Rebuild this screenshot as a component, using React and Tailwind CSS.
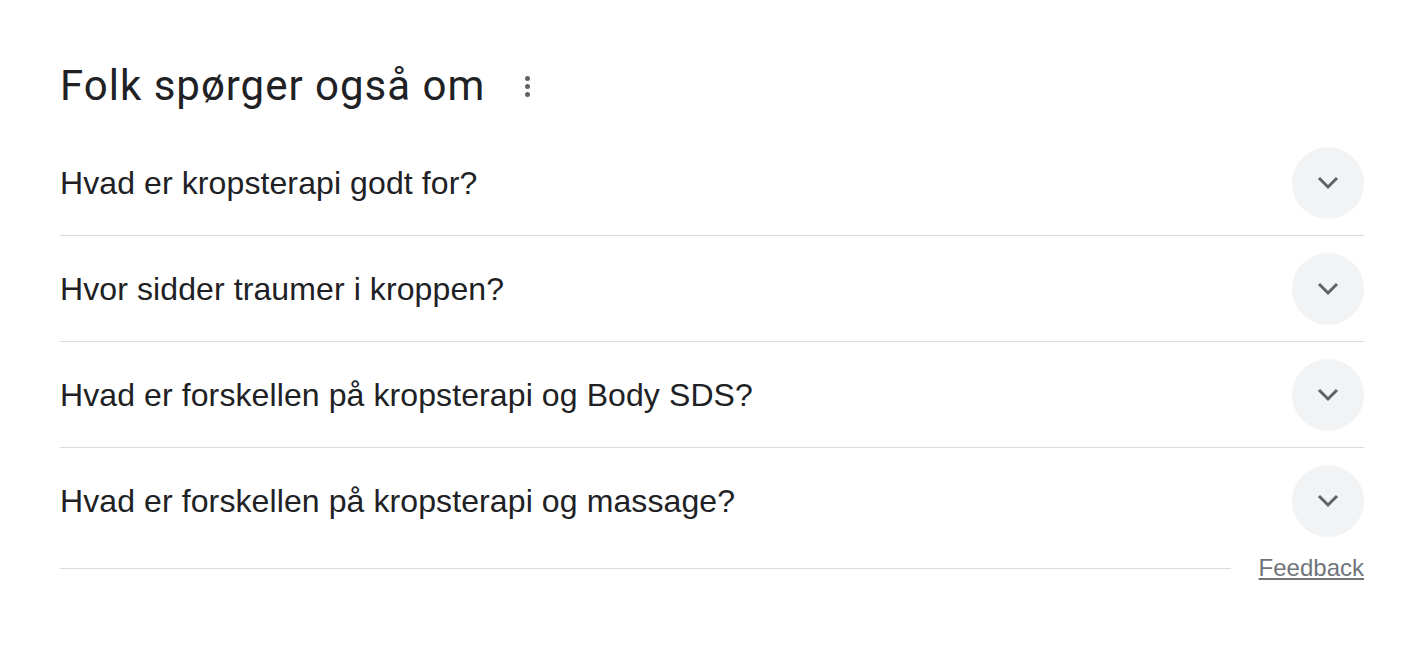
import React from 'react';

const questions = [
    'Hvad er kropsterapi godt for?',
    'Hvor sidder traumer i kroppen?',
    'Hvad er forskellen på kropsterapi og Body SDS?',
    'Hvad er forskellen på kropsterapi og massage?',
];

function Chevron() {
    return (
        <svg width="24" height="14" viewBox="0 0 24 14" fill="none">
            <polyline points="3,2 12,11 21,2" stroke="#5f6368" strokeWidth="3" />
        </svg>
    );
}

function QuestionRow({ text, last }) {
    return (
        <div className={`flex h-[106px] items-center justify-between ${last ? '' : 'border-b border-[#dadce0]'}`}>
            <span className="text-[32px] leading-[40px] tracking-[0.1px] text-[#202124]">{text}</span>
            <div className="flex h-[72px] w-[72px] items-center justify-center rounded-full bg-[#f1f3f4]">
                <Chevron />
            </div>
        </div>
    );
}

export default function App() {
    return (
        <div className="min-h-screen bg-white font-['Liberation_Sans',Arial,sans-serif]">
            <div className="ml-[60px] w-[1304px] pt-[60px]">
                <div className="flex h-[52px] items-center">
                    <h2 className="font-['Roboto',sans-serif] text-[42px] leading-[52px] tracking-[1px] text-[#202124]">
                        Folk spørger også om
                    </h2>
                    <div className="ml-[40px] flex flex-col gap-[3px]">
                        <span className="h-[5px] w-[5px] rounded-full bg-[#5f6368]" />
                        <span className="h-[5px] w-[5px] rounded-full bg-[#5f6368]" />
                        <span className="h-[5px] w-[5px] rounded-full bg-[#5f6368]" />
                    </div>
                </div>
                <div className="mt-[18px]">
                    {questions.map((q, i) => (
                        <QuestionRow key={q} text={q} last={i === questions.length - 1} />
                    ))}
                </div>
                <div className="flex h-[28px] items-center">
                    <div className="h-px flex-1 bg-[#dadce0]" />
                    <a className="ml-[28px] text-[24px] leading-[28px] text-[#70757a] underline">Feedback</a>
                </div>
            </div>
        </div>
    );
}
